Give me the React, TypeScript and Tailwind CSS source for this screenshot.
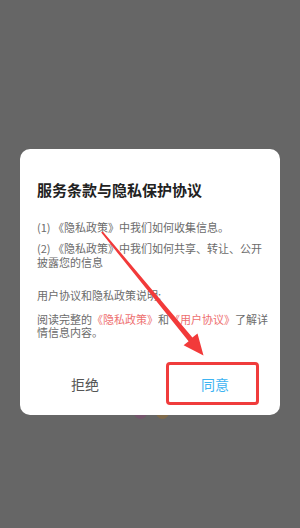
import React from 'react';

const font = { fontFamily: '"Noto Sans CJK SC", "Noto Sans", sans-serif' };

function Arrow() {
  // tapered red arrow from the (2) line down to the 同意 button
  return (
    <svg className="pointer-events-none absolute inset-0" width="300" height="528" viewBox="0 0 300 528">
      <polygon
        points="101.2,232.6 102.8,231.4 192.4,337.6 197.5,333.4 203.5,355.5 183.6,345.2 188.6,341.2"
        fill="#f23a3a"
      />
    </svg>
  );
}

export default function App() {
  return (
    <div className="relative h-[528px] w-[300px] overflow-hidden bg-[#666666]" style={font}>
      {/* dimmed app content peeking below the dialog */}
      <div className="absolute left-[134px] top-[404px] h-[15px] w-[13px] rounded-full bg-[#74566c]" />
      <div className="absolute left-[156px] top-[404px] h-[15px] w-[13px] rounded-full bg-[#7e6a4c]" />

      <div className="flex justify-center pt-[149px]">
        <div className="relative w-[260px] rounded-[10px] bg-white pl-[17px] pr-[10px] pt-[30px] pb-[8px]">
          <h2 className="text-[15px] font-bold leading-[22px] text-[#222222]">服务条款与隐私保护协议</h2>

          <div className="mt-[19.5px] text-[11px] leading-[13.5px] text-[#6b6b6b]">
            <p>(1) 《隐私政策》中我们如何收集信息。</p>
            <p className="mt-[8px]">(2) 《隐私政策》中我们如何共享、转让、公开披露您的信息</p>
            <p className="mt-[20px]">用户协议和隐私政策说明:</p>
            <p className="mt-[10px]">
              阅读完整的<span className="text-[#ee6f6f]">《隐私政策》</span>和<span className="text-[#ee6f6f]">《用户协议》</span>了解详情信息内容。
            </p>
          </div>

          <div className="-ml-[17px] -mr-[10px] mt-[23px] flex h-[44px] items-center">
            <button className="flex h-full flex-1 items-center justify-center text-[14px] text-[#555555]">拒绝</button>
            <button className="flex h-full flex-1 items-center justify-center text-[14px] text-[#3db4f2]">同意</button>
          </div>

          {/* annotation box around 同意 */}
          <div className="pointer-events-none absolute left-[146px] top-[213px] h-[43px] w-[93px] rounded-[4px] border-[3px] border-[#f03c3c]" />
        </div>
      </div>

      <Arrow />
    </div>
  );
}
